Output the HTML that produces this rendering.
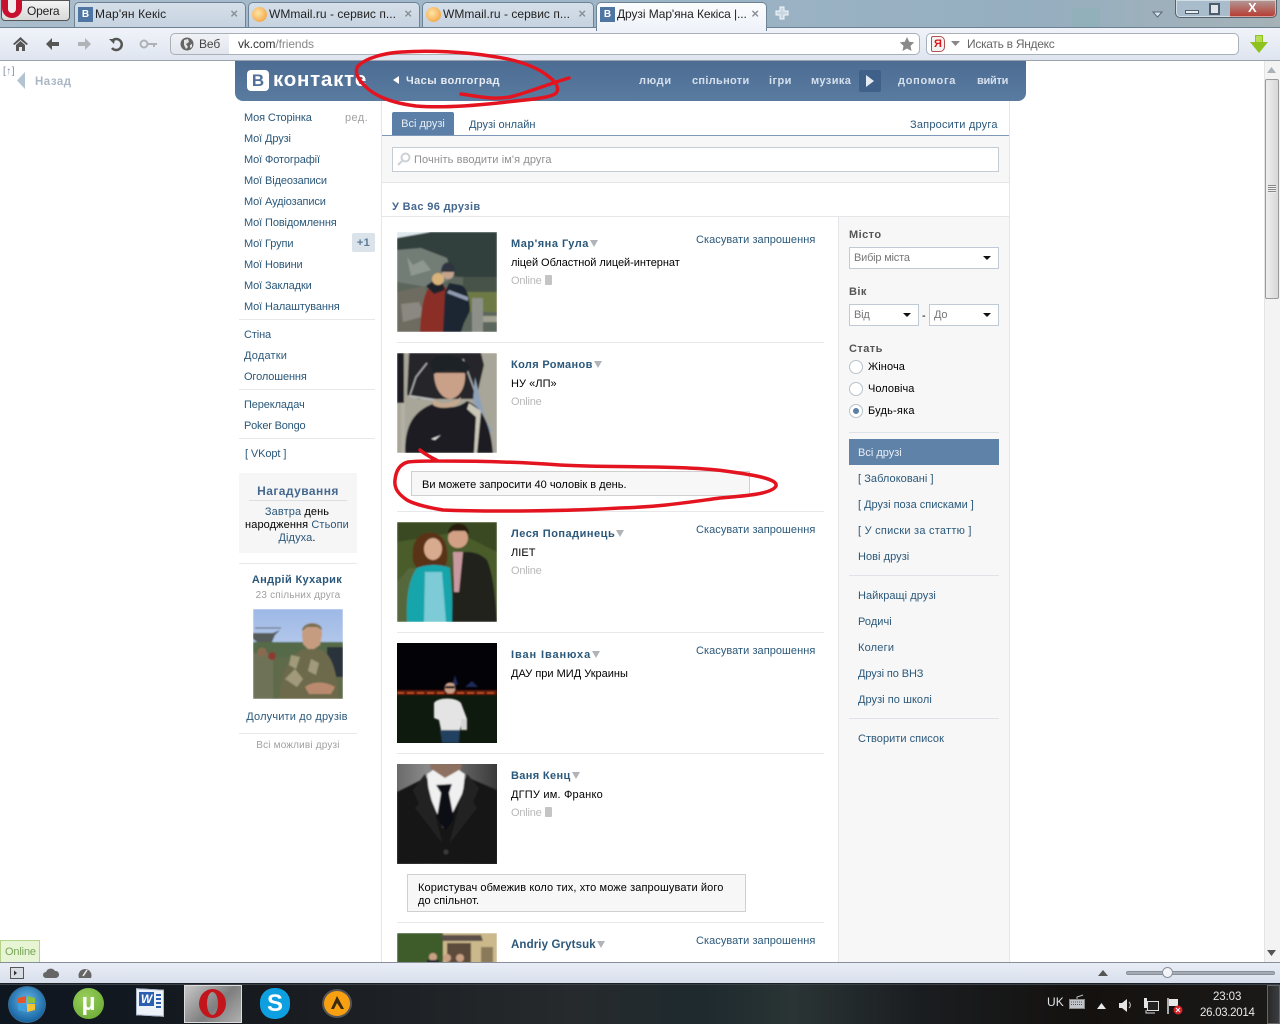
<!DOCTYPE html>
<html><head><meta charset="utf-8"><title>Друзі</title>
<style>
html,body{margin:0;padding:0;width:1280px;height:1024px;overflow:hidden;background:#fff}
body{position:relative;font-family:"Liberation Sans","Noto Sans CJK SC",sans-serif;font-size:11px;color:#000}
.t{position:absolute;white-space:nowrap;line-height:14px;letter-spacing:.05px;margin-top:1px}
.c{margin-top:0}
.l{color:#2b587a}
.m{letter-spacing:-.12px}
.b{font-weight:bold}
.g{color:#a0a0a0}
.ctr{left:239px;width:118px;text-align:center}
.box{position:absolute;box-sizing:border-box}
.tab{position:absolute;top:2px;height:25px;box-sizing:border-box;border:1px solid #6d8296;border-bottom:none;border-radius:5px 5px 0 0;background:linear-gradient(#d5dfe9,#c6d3e0)}
.tab span{position:absolute;top:4px;font-size:12px;line-height:15px;white-space:nowrap;color:#222}
.tab i{position:absolute;right:7px;top:3px;font-style:normal;font-size:13px;color:#8a8f96;font-weight:bold}
.fav{position:absolute;left:3px;top:4px;width:15px;height:15px;background:#4f76a3;color:#fff;font:bold 10px/15px "Liberation Sans",sans-serif;text-align:center}
.mail{position:absolute;left:3px;top:4px;width:15px;height:15px;border-radius:50%;background:radial-gradient(circle at 40% 40%,#ffe4a8,#f0962a)}
.nav{position:absolute;top:74px;color:#d5e0ec;font-weight:bold;font-size:11px;line-height:14px;letter-spacing:.42px;white-space:nowrap}
.sep{position:absolute;height:1px;background:#e6e8ea}
.ph{position:absolute;width:100px;height:100px;left:397px;overflow:hidden}
.sel{position:absolute;box-sizing:border-box;height:22px;border:1px solid #c0cad5;background:#fff;color:#777;font-size:11px;line-height:21px;padding-left:4px;letter-spacing:-.2px}
.sel:after{content:"";position:absolute;right:7px;top:8px;border:4px solid transparent;border-top:4px solid #111;border-bottom:0}
.rd{position:absolute;left:849px;width:14px;height:14px;box-sizing:border-box;border:1px solid #b9c2cb;border-radius:50%;background:#fff}
.tr{display:inline-block;border:4px solid transparent;border-top:7px solid #b0b4b8;border-bottom:0;margin-left:1px;vertical-align:0}
.ol{color:#b8b8b8;letter-spacing:-.2px}
.ph0{position:absolute;width:7px;height:10px;background:#c4c4c4;border-radius:1px}
.ti{position:absolute}
</style></head><body>

<!-- browser chrome -->
<div class="box" style="left:0;top:0;width:1280px;height:28px;background:linear-gradient(90deg,#a9bdcc,#9db5c6 50%,#95aec0 80%,#a5b2b8)"></div>
<div class="box" style="left:1072px;top:8px;width:28px;height:19px;background:#8fb0b8;opacity:.7"></div>
<div class="box" style="left:1px;top:0;width:69px;height:21px;background:linear-gradient(#f3f3f3,#d9d9d9);border:1px solid #555;border-radius:0 0 4px 4px"></div>
<div class="box" style="left:2px;top:0;width:20px;height:18px;background:#c8102e;border-radius:0 0 11px 11px"></div>
<div class="box" style="left:8px;top:0;width:8px;height:13px;background:#f3eeee;border-radius:0 0 5px 5px"></div>
<div class="t c" style="left:27px;top:4px;font-size:12px;color:#222;letter-spacing:-.2px">Opera</div>

<div class="tab" style="left:74px;width:172px"><b class="fav">В</b><span style="left:20px;letter-spacing:.12px">Мар'ян Кекіс</span><i>×</i></div>
<div class="tab" style="left:248px;width:172px"><b class="mail"></b><span style="left:20px;letter-spacing:.03px">WMmail.ru - сервис п...</span><i>×</i></div>
<div class="tab" style="left:422px;width:172px"><b class="mail"></b><span style="left:20px;letter-spacing:.03px">WMmail.ru - сервис п...</span><i>×</i></div>
<div class="tab" style="left:596px;width:171px;height:29px;background:linear-gradient(#fbfcfe,#eef2f8);z-index:2"><b class="fav">В</b><span style="left:20px;letter-spacing:-.08px">Друзі Мар'яна Кекіса |...</span><i>×</i></div>
<svg class="ti" style="left:775px;top:6px" width="14" height="14"><path d="M5 1h4v4h4v4H9v4H5V9H1V5h4z" fill="#c8d6e2" stroke="#f4f7fa"/></svg>
<svg class="ti" style="left:1152px;top:11px" width="11" height="7"><path d="M1 1h9L5.500 6z" fill="#dfe7ee" stroke="#56697a"/></svg>

<div class="box" style="left:1175px;top:0;width:102px;height:18px;border:1px solid #52646f;border-top:none;border-radius:0 0 5px 5px;box-shadow:inset 0 0 0 1px rgba(255,255,255,.5);overflow:hidden;background:linear-gradient(90deg,#a9bccb 0 54px,rgba(0,0,0,0) 54px),linear-gradient(#b09a98,#b8392e)"></div>
<div class="box" style="left:1185px;top:10px;width:14px;height:4px;background:#e8eef3;border:1px solid #4e5d69"></div>
<div class="box" style="left:1209px;top:3px;width:11px;height:12px;border:2px solid #4e5d69;background:#dfe7ed"></div>
<div class="t c b" style="left:1248px;top:1px;color:#fff;font-size:13px">X</div>

<!-- toolbar -->
<div class="box" style="left:0;top:27px;width:1280px;height:34px;background:linear-gradient(#f0f3f9,#dfe5f0);border-bottom:1px solid #9aa3ac;border-top:1px solid #6e8190"></div>
<svg class="ti" style="left:12px;top:36px" width="18" height="16"><path d="M1 8L8.500 1l7.500 7-1.500 1L8.500 4l-6 5z M4 9l4.500-4L13 9v6H10v-4H7v4H4z" fill="#555"/></svg>
<svg class="ti" style="left:45px;top:37px" width="16" height="14"><path d="M7 1L1 7l6 6V9h7V5H7z" fill="#555"/></svg>
<svg class="ti" style="left:76px;top:37px" width="16" height="14"><path d="M9 1l6 6-6 6V9H2V5h7z" fill="#b0b4b9"/></svg>
<svg class="ti" style="left:108px;top:36px" width="16" height="16"><path d="M4 5a5.500 5.500 0 1 1 0 7" fill="none" stroke="#555" stroke-width="2.500"/><path d="M1 3l6 0-1 5z" fill="#555"/></svg>
<svg class="ti" style="left:139px;top:38px" width="20" height="12"><circle cx="5" cy="6" r="3.500" fill="none" stroke="#aeb2b6" stroke-width="2"/><path d="M8 5h10v2h-2v2h-2V7H8z" fill="#aeb2b6"/></svg>
<div class="box" style="left:170px;top:33px;width:60px;height:22px;border:1px solid #a9b0b8;border-radius:5px 0 0 5px;background:linear-gradient(#f0f2f6,#e2e6ec)"></div>
<div class="box" style="left:229px;top:33px;width:691px;height:22px;border:1px solid #a9b0b8;border-left:none;border-radius:0 5px 5px 0;background:#fff"></div>
<svg class="ti" style="left:180px;top:37px" width="15" height="15"><circle cx="7" cy="7" r="6.500" fill="#666"/><path d="M4 3l4-1 1 3-3 2 2 3-2 2-2-4z M10 8l2-1 0 3-2 1z" fill="#e4e4e4"/></svg>
<div class="t c" style="left:199px;top:37px;font-size:12px;color:#444;letter-spacing:-.1px">Веб</div>
<div class="t c" style="left:238px;top:37px;font-size:12px;color:#333;letter-spacing:-.1px">vk.com<span style="color:#888">/friends</span></div>
<svg class="ti" style="left:899px;top:36px" width="16" height="16"><path d="M8 1l2.200 4.800 5 .6-3.700 3.500 1 5.100L8 12.500 3.500 15l1-5.100L.8 6.400l5-.6z" fill="#8a8a8a"/></svg>
<div class="box" style="left:926px;top:33px;width:313px;height:22px;border:1px solid #a9b0b8;border-radius:5px;background:#fff"></div>
<div class="box" style="left:931px;top:36px;width:14px;height:16px;background:#f2f2f2;border:1px solid #b05050;border-radius:2px 5px 5px 2px;color:#d81818;font:bold 11px/15px 'Liberation Sans',sans-serif;text-align:center">Я</div>
<svg class="ti" style="left:951px;top:41px" width="9" height="6"><path d="M0 0h9L4.500 5z" fill="#888"/></svg>
<div class="t c" style="left:967px;top:37px;font-size:12px;color:#666;letter-spacing:-.28px">Искать в Яндекс</div>
<svg class="ti" style="left:1249px;top:34px" width="20" height="20"><path d="M6 1h8v7h5L10 19 1 8h5z" fill="#8ec21f"/><path d="M7 2h6v6H7z" fill="#b8dd55"/></svg>

<!-- back column -->
<div class="t c" style="left:3px;top:65px;font-size:10px;color:#7b8a99;letter-spacing:.5px">[↑]</div>
<svg class="ti" style="left:17px;top:72px" width="9" height="17"><path d="M8 0v17L0 8.500z" fill="#b4c3d2"/></svg>
<div class="t b" style="left:35px;top:74px;font-size:11.500px;color:#a9b7c6;letter-spacing:.5px">Назад</div>

<!-- header -->
<div class="box" style="left:235px;top:61px;width:791px;height:40px;background:linear-gradient(#4c6c93,#5a7ba0);border-radius:0 0 8px 8px"></div>
<div class="box" style="left:247px;top:70px;width:22px;height:21px;background:#fff;border-radius:4px;color:#4f7099;font:bold 17px/21px 'Liberation Sans',sans-serif;text-align:center">В</div>
<div class="t c b" style="left:273px;top:69px;font-size:20.500px;line-height:22px;color:#fff;letter-spacing:.75px">контакте</div>
<svg class="ti" style="left:393px;top:76px" width="6" height="8"><path d="M6 0v8L0 4z" fill="#fff"/></svg>
<div class="nav" style="left:406px;color:#e5ecf3;letter-spacing:.42px">Часы волгоград</div>
<div class="nav" style="left:639px;letter-spacing:.7px">люди</div>
<div class="nav" style="left:692px;letter-spacing:.3px">спільноти</div>
<div class="nav" style="left:769px">ігри</div>
<div class="nav" style="left:811px">музика</div>
<div class="box" style="left:859px;top:70px;width:22px;height:22px;background:#3f6088;border-radius:2px"></div>
<svg class="ti" style="left:866px;top:75px" width="8" height="12"><path d="M0 0l8 6-8 6z" fill="#e4ebf3"/></svg>
<div class="nav" style="left:898px;letter-spacing:.72px">допомога</div>
<div class="nav" style="left:977px;letter-spacing:-.25px">вийти</div>

<!-- left menu -->
<div class="t l m" style="left:244px;top:110px">Моя Сторінка</div>
<div class="t g" style="left:345px;top:110px;letter-spacing:.4px">ред.</div>
<div class="t l m" style="left:244px;top:131px">Мої Друзі</div>
<div class="t l m" style="left:244px;top:152px">Мої Фотографії</div>
<div class="t l m" style="left:244px;top:173px">Мої Відеозаписи</div>
<div class="t l m" style="left:244px;top:194px">Мої Аудіозаписи</div>
<div class="t l m" style="left:244px;top:215px">Мої Повідомлення</div>
<div class="t l m" style="left:244px;top:236px">Мої Групи</div>
<div class="box b" style="left:352px;top:233px;width:23px;height:19px;background:#dae2ea;border-radius:2px;color:#5c7a99;text-align:center;line-height:20px;letter-spacing:.4px">+1</div>
<div class="t l m" style="left:244px;top:257px">Мої Новини</div>
<div class="t l m" style="left:244px;top:278px">Мої Закладки</div>
<div class="t l m" style="left:244px;top:299px">Мої Налаштування</div>
<div class="sep" style="left:239px;top:319px;width:136px"></div>
<div class="t l m" style="left:244px;top:327px">Стіна</div>
<div class="t l" style="left:244px;top:348px;letter-spacing:.2px">Додатки</div>
<div class="t l m" style="left:244px;top:369px">Оголошення</div>
<div class="sep" style="left:239px;top:389px;width:136px"></div>
<div class="t l m" style="left:244px;top:397px">Перекладач</div>
<div class="t l" style="left:244px;top:418px;letter-spacing:-.2px">Poker Bongo</div>
<div class="sep" style="left:239px;top:438px;width:136px"></div>
<div class="t l" style="left:245px;top:446px;letter-spacing:-.1px">[ VKopt ]</div>

<div class="box" style="left:239px;top:473px;width:118px;height:80px;background:#f6f6f7"></div>
<div class="t b ctr" style="top:483px;font-size:12px;color:#45688e;letter-spacing:.45px">Нагадування</div>
<div class="sep" style="left:249px;top:500px;width:98px;background:#dcdfe2"></div>
<div class="t ctr" style="left:238px;top:504px;letter-spacing:.1px"><span class="l">Завтра</span> день</div>
<div class="t ctr" style="left:238px;top:517px;letter-spacing:.1px">народження <span class="l">Стьопи</span></div>
<div class="t ctr" style="left:238px;top:530px;letter-spacing:.1px"><span class="l">Дідуха</span>.</div>
<div class="sep" style="left:239px;top:563px;width:118px"></div>
<div class="t b l ctr" style="left:238px;top:572px;letter-spacing:.35px">Андрій Кухарик</div>
<div class="t g ctr" style="top:588px;font-size:10px;letter-spacing:.17px">23 спільних друга</div>

<svg class="ti" style="left:253px;top:609px" width="90" height="90" viewBox="0 0 90 90">
<defs><filter id="bl"><feGaussianBlur stdDeviation=".9"/></filter><linearGradient id="sky" x1="0" y1="0" x2="0" y2="1"><stop offset="0" stop-color="#9db8e6"/><stop offset="1" stop-color="#d3e0ee"/></linearGradient></defs>
<g filter="url(#bl)"><rect width="90" height="90" fill="url(#sky)"/><rect y="33" width="90" height="20" fill="#556a4a"/><rect y="48" width="90" height="42" fill="#5f6a4c"/><path d="M0 24h20l7-3-5 5-3 7H4l-4-3z" fill="#555a5a"/><path d="M2 19h26" stroke="#555"/><rect x="0" y="44" width="20" height="46" fill="#6e7358"/><circle cx="9" cy="43" r="4.500" fill="#8a6a50"/><circle cx="19" cy="47" r="4" fill="#8a3a30"/><rect x="74" y="38" width="16" height="30" fill="#2c333b"/><path d="M49 26c0-16 20-16 20 0l-2 10-6 4h-6l-5-5z" fill="#c69c80"/><path d="M49 22c0-10 20-10 20-1l-5-3h-10z" fill="#7a6d50"/><path d="M26 90c2-22 8-42 24-50h16c14 4 18 26 20 50z" fill="#6c6a4c"/><path d="M32 70l10-10 8 10-6 8zM58 50l8 4-3 12-8-4zM38 46l9 2-4 12-7-4z" fill="#a09a7a"/><path d="M52 78c8-6 20-6 30 0l-4 7H56z" fill="#b98a6e"/></g></svg>

<div class="t l ctr" style="left:238px;top:709px;letter-spacing:.17px">Долучити до друзів</div>
<div class="sep" style="left:239px;top:733px;width:118px"></div>
<div class="t g ctr" style="top:738px;font-size:10px;letter-spacing:.17px">Всі можливі друзі</div>

<!-- main column -->
<div class="box" style="left:381px;top:101px;width:629px;height:862px;border-left:1px solid #e4e6e9;border-right:1px solid #e4e6e9"></div>
<div class="box" style="left:392px;top:112px;width:62px;height:23px;background:#5b7fa6;border-radius:2px 2px 0 0;color:#e8eef5;text-align:center;line-height:25px">Всі друзі</div>
<div class="box" style="left:382px;top:135px;width:627px;height:1px;background:#7e99b8"></div>
<div class="t l" style="left:469px;top:117px;letter-spacing:0">Друзі онлайн</div>
<div class="t l" style="left:910px;top:117px;letter-spacing:.2px">Запросити друга</div>
<div class="box" style="left:382px;top:136px;width:627px;height:47px;background:#f7f7f7;border-bottom:1px solid #e4e6e9"></div>
<div class="box" style="left:392px;top:147px;width:607px;height:25px;background:#fff;border:1px solid #c4ccd5"></div>
<svg class="ti" style="left:397px;top:152px" width="14" height="14"><circle cx="8.500" cy="5.500" r="4" fill="none" stroke="#ccd1d6" stroke-width="2"/><path d="M5 9l-4 4" stroke="#ccd1d6" stroke-width="2"/></svg>
<div class="t" style="left:414px;top:152px;color:#8f8f8f;letter-spacing:.1px">Почніть вводити ім'я друга</div>
<div class="t b" style="left:392px;top:199px;color:#45688e;letter-spacing:.35px">У Вас 96 друзів</div>
<div class="box" style="left:382px;top:216px;width:627px;height:1px;background:#e4e6e9"></div>

<!-- filter column -->
<div class="box" style="left:838px;top:217px;width:171px;height:746px;background:#f7f7f7;border-left:1px solid #e4e6e9"></div>
<div class="t b" style="left:849px;top:227px;color:#555;letter-spacing:.45px">Місто</div>
<div class="sel" style="left:849px;top:247px;width:150px">Вибір міста</div>
<div class="t b" style="left:849px;top:284px;color:#555;letter-spacing:.45px">Вік</div>
<div class="sel" style="left:849px;top:304px;width:70px">Від</div>
<div class="t" style="left:922px;top:308px">-</div>
<div class="sel" style="left:929px;top:304px;width:70px">До</div>
<div class="t b" style="left:849px;top:341px;color:#555;letter-spacing:.45px">Стать</div>
<div class="rd" style="top:360px"></div><div class="t" style="left:868px;top:359px;letter-spacing:.1px">Жіноча</div>
<div class="rd" style="top:382px"></div><div class="t" style="left:868px;top:381px">Чоловіча</div>
<div class="rd" style="top:404px"></div><div class="box" style="left:853px;top:408px;width:6px;height:6px;border-radius:50%;background:#5b7fa6"></div><div class="t" style="left:868px;top:403px;letter-spacing:.2px">Будь-яка</div>
<div class="sep" style="left:849px;top:432px;width:150px;background:#dfe3e8"></div>
<div class="box" style="left:849px;top:439px;width:150px;height:26px;background:#5f82a8;color:#e8eef5;line-height:28px;padding-left:9px">Всі друзі</div>
<div class="t l" style="left:858px;top:471px">[ Заблоковані ]</div>
<div class="t l" style="left:858px;top:497px;letter-spacing:0">[ Друзі поза списками ]</div>
<div class="t l" style="left:858px;top:523px;letter-spacing:.25px">[ У списки за статтю ]</div>
<div class="t l" style="left:858px;top:549px">Нові друзі</div>
<div class="sep" style="left:849px;top:575px;width:150px;background:#dfe3e8"></div>
<div class="t l" style="left:858px;top:588px">Найкращі друзі</div>
<div class="t l" style="left:858px;top:614px">Родичі</div>
<div class="t l" style="left:858px;top:640px;letter-spacing:.2px">Колеги</div>
<div class="t l" style="left:858px;top:666px;letter-spacing:-.1px">Друзі по ВНЗ</div>
<div class="t l" style="left:858px;top:692px">Друзі по школі</div>
<div class="sep" style="left:849px;top:718px;width:150px;background:#dfe3e8"></div>
<div class="t l" style="left:858px;top:731px;letter-spacing:.03px">Створити список</div>

<!-- friends -->
<svg class="ph" style="top:232px" viewBox="0 0 100 100"><g filter="url(#bl)"><rect width="100" height="100" fill="#5c665c"/><path d="M0 6L34 0H0z" fill="#dfe8ee"/><path d="M0 6L34 0h66v45H60L0 22z" fill="#323f3d"/><path d="M0 18l24-2 26 10 6 20-20 10-36-6z" fill="#727d76"/><path d="M10 25l6 8 10-5 8 10-20 6z" fill="#8e9890"/><path d="M66 45h34v15l-34 4z" fill="#47524a"/><path d="M58 60h42v20H58z" fill="#6d7a45"/><path d="M0 60l28-6 10 46H0z" fill="#6e6c60"/><path d="M4 72l18-2 6 14-22 6z" fill="#8a8880"/><rect x="75" y="66" width="11" height="34" fill="#8c9088"/><path d="M86 84h14v6H86z" fill="#a2a292"/><path d="M23 100c1-24 4-40 10-45 6-4 13-3 16 1 3 6 4 12 5 18l4 8-6 3-3 15z" fill="#8a2e26"/><path d="M29 54l7-5 10 3 2 6-11 4z" fill="#1d2229"/><circle cx="41" cy="47" r="6" fill="#d7b27a"/><path d="M46 100l2-40 4-9 12 2c6 2 9 14 9 26l-6 12-3 9z" fill="#1f2533"/><path d="M52 58l19 7v4l-21-8z" fill="#8f9bb0"/><circle cx="51" cy="41" r="6" fill="#c4a38c"/><path d="M44 40c0-13 14-13 14 0z" fill="#2e3440"/></g></svg>
<div class="t b l" style="left:511px;top:236px;letter-spacing:.5px">Мар'яна Гула<span class="tr"></span></div>
<div class="t" style="left:511px;top:255px;letter-spacing:-.05px">ліцей Областной лицей-интернат</div>
<div class="t ol" style="left:511px;top:273px">Online</div><div class="ph0" style="left:545px;top:275px"></div>
<div class="t l" style="left:696px;top:232px">Скасувати запрошення</div>
<div class="sep" style="left:397px;top:342px;width:427px"></div>

<svg class="ph" style="top:353px" viewBox="0 0 100 100"><g filter="url(#bl)"><rect width="100" height="100" fill="#a8a599"/><path d="M0 0h7v50H0z" fill="#1e1e22"/><path d="M4 50h4v50H4z" fill="#b3b1a5"/><path d="M12 0h72l3 12-8 34H22L10 42z" fill="#25262b"/><path d="M13 42L19 24 30 10" stroke="#a9aaaa" stroke-width="1.500" fill="none"/><path d="M12 43l26 4" stroke="#b9baba" stroke-width="2"/><path d="M66 6l14 38" stroke="#a9aaaa" stroke-width="1.500" fill="none"/><path d="M78 24l10 42 7 12-5 2-14-32z" fill="#8ea1b8"/><path d="M8 100c0-28 8-42 30-50 10 6 22 6 32-2 16 6 24 26 26 52z" fill="#1a1c24"/><path d="M72 50l12 8-4 42h-3l2-36-9-8z" fill="#c9c7b8"/><path d="M36 46c6 6 18 6 28-2l-2 6c-8 6-20 6-26 2z" fill="#c6a88e"/><path d="M37 20h31c1 12-4 24-14 26-10 0-17-12-17-26z" fill="#c9a088"/><path d="M33 12c0-7 8-10 16-10 8 0 18 4 24 12l-4 7c-10-6-22-6-32 0z" fill="#1f2228"/><path d="M34 86l10-4-6 5z" fill="#e6e6e6"/></g></svg>
<div class="t b l" style="left:511px;top:357px;letter-spacing:.35px">Коля Романов<span class="tr"></span></div>
<div class="t" style="left:511px;top:376px">НУ «ЛП»</div>
<div class="t ol" style="left:511px;top:394px">Online</div>

<div class="box" style="left:411px;top:471px;width:339px;height:25px;background:#f7f7f7;border:1px solid #d0d0d0"></div>
<div class="t" style="left:422px;top:477px;letter-spacing:0">Ви можете запросити 40 чоловік в день.</div>
<div class="sep" style="left:397px;top:511px;width:427px"></div>

<svg class="ph" style="top:522px" viewBox="0 0 100 100"><g filter="url(#bl)"><rect width="100" height="100" fill="#4a5c2a"/><path d="M0 0h100v30L60 10 0 20z" fill="#3a4a20"/><path d="M0 100V60l12-14h8v54z" fill="#55683a"/><path d="M16 30c0-26 34-26 34 0 1 6 0 12-3 16H20c-4-4-5-10-4-16z" fill="#5a3018"/><ellipse cx="36" cy="27" rx="9" ry="11" fill="#d9ab8e"/><path d="M10 100c-1-22 1-42 10-54 10-4 24-4 33 0l4 54z" fill="#18a5ab"/><path d="M28 50h17l4 50H27z" fill="#7ccbd6"/><path d="M55 100l1-66c8-6 24-6 34 4 6 14 8 34 10 62z" fill="#24201e"/><path d="M56 30l10 0-4 40-5 0z" fill="#c89aa0"/><circle cx="61" cy="16" r="10" fill="#d2a084"/><path d="M51 12c0-14 21-14 21 0l-4-3h-12z" fill="#2a1a10"/></g></svg>
<div class="t b l" style="left:511px;top:526px;letter-spacing:.5px">Леся Попадинець<span class="tr"></span></div>
<div class="t" style="left:511px;top:545px">ЛІЕТ</div>
<div class="t ol" style="left:511px;top:563px">Online</div>
<div class="t l" style="left:696px;top:522px">Скасувати запрошення</div>
<div class="sep" style="left:397px;top:632px;width:427px"></div>

<svg class="ph" style="top:643px" viewBox="0 0 100 100"><rect width="100" height="100" fill="#030206"/><rect y="52" width="100" height="48" fill="#0f1a0e"/><g filter="url(#bl)"><rect y="47" width="100" height="5" fill="#5a1a10"/><path d="M0 50h100" stroke="#d05520" stroke-width="1.500" stroke-dasharray="7 3"/><path d="M55 42l3-10 3 10zM68 44l7-6 6 6z" fill="#1b2a5a"/><circle cx="53" cy="45" r="5.500" fill="#caa08a"/><rect x="48" y="43" width="10" height="2.500" fill="#111"/><path d="M37 60c4-6 22-6 27 0l6 16-5 2-2 9H44l-2-10-5-2z" fill="#e4e4e4"/><path d="M43 87h20l-1 13H45z" fill="#23405f"/><path d="M64 76h6v11h-6z" fill="#d4d4d4"/></g></svg>
<div class="t b l" style="left:511px;top:647px;letter-spacing:.9px">Іван Іванюха<span class="tr"></span></div>
<div class="t" style="left:511px;top:666px;letter-spacing:0">ДАУ при МИД Украины</div>
<div class="t l" style="left:696px;top:643px">Скасувати запрошення</div>
<div class="sep" style="left:397px;top:753px;width:427px"></div>

<svg class="ph" style="top:764px" viewBox="0 0 100 100"><defs><linearGradient id="gy" x1="0" y1="0" x2="1" y2="0"><stop offset="0" stop-color="#6a6a6a"/><stop offset=".3" stop-color="#8a8a8a"/><stop offset="1" stop-color="#3a3a3a"/></linearGradient></defs><rect width="100" height="100" fill="url(#gy)"/><g filter="url(#bl)"><path d="M0 28l28-14 44 0 28 12v74H0z" fill="#141414"/><path d="M33 0h32l-2 8-14 6-14-6z" fill="#8e7060"/><path d="M30 10l6-4 12 8 14-8 6 4-2 18-18 36h-2L32 30z" fill="#f0f0f0"/><path d="M39 21l16-1-3 9 5 26-9 12-8-14 4-24z" fill="#111114"/><path d="M28 10l-12 16 6 14-4 4 28 36-4-14z" fill="#222"/><path d="M70 10l12 14-6 14 4 6-28 36 4-14z" fill="#222"/><circle cx="49" cy="88" r="2.500" fill="#3a3a3a"/></g></svg>
<div class="t b l" style="left:511px;top:768px;letter-spacing:.35px">Ваня Кенц<span class="tr"></span></div>
<div class="t" style="left:511px;top:787px;letter-spacing:.2px">ДГПУ им. Франко</div>
<div class="t ol" style="left:511px;top:805px">Online</div><div class="ph0" style="left:545px;top:807px"></div>
<div class="box" style="left:407px;top:874px;width:339px;height:38px;background:#f7f7f7;border:1px solid #d0d0d0"></div>
<div class="t" style="left:418px;top:880px;letter-spacing:.1px">Користувач обмежив коло тих, хто може запрошувати його</div>
<div class="t" style="left:418px;top:893px">до спільнот.</div>
<div class="sep" style="left:397px;top:922px;width:427px"></div>

<svg class="ph" style="top:933px;height:30px" viewBox="0 0 100 30"><g filter="url(#bl)"><rect width="100" height="30" fill="#cbb98c"/><rect width="46" height="30" fill="#3e5c2c"/><path d="M44 2h40l2 6H46z" fill="#5a5048"/><rect x="50" y="10" width="24" height="20" fill="#5c4c3a"/><rect x="84" y="14" width="12" height="16" fill="#8a7a5a"/><circle cx="36" cy="24" r="4" fill="#caa084"/><rect x="30" y="27" width="12" height="3" fill="#223"/><circle cx="50" cy="25" r="4" fill="#caa084"/><circle cx="63" cy="25" r="4" fill="#caa084"/></g></svg>
<div class="t b l" style="left:511px;top:937px;font-size:11.500px;letter-spacing:.12px">Andriy Grytsuk<span class="tr"></span></div>
<div class="t l" style="left:696px;top:933px">Скасувати запрошення</div>

<!-- scribbles -->
<svg class="ti" style="left:0;top:0;z-index:5;pointer-events:none" width="1280" height="1024" fill="none" stroke="#e3141f" stroke-width="3.500" stroke-linecap="round" stroke-linejoin="round">
<path d="M367 88C358 80 354 72 358 66C366 58 384 53 402 52C430 50 465 52 490 56C520 60 538 68 548 76C556 82 560 88 556 93C550 99 520 100 498 103C470 106 440 108 416 106C392 103 376 96 367 88"/>
<path d="M569 78C548 84 530 92 510 97C492 100 476 96 461 94"/>
<path d="M420 450C426 455 432 458 438 461C480 461 520 462 560 465C610 468 680 465 725 471C755 475 778 479 776 486C772 494 745 496 720 498C690 502 660 507 620 508C570 511 490 512 443 510C425 507 412 503 407 500C398 494 394 488 395 480C396 470 400 464 408 462C416 461 426 461 438 461"/>
</svg>

<!-- scrollbar -->
<div class="box" style="left:1264px;top:61px;width:16px;height:902px;background:#f3f3f3;border-left:1px solid #e4e4e4"></div>
<svg class="ti" style="left:1267px;top:67px" width="9" height="6"><path d="M4.500 0L9 6H0z" fill="#aab0b6"/></svg>
<div class="box" style="left:1265px;top:79px;width:14px;height:220px;background:linear-gradient(90deg,#eee,#d8d8d8);border:1px solid #9a9a9a;border-radius:2px"></div>
<div class="box" style="left:1268px;top:185px;width:8px;height:8px;background:repeating-linear-gradient(#888 0 1px,#eee 1px 2px)"></div>
<svg class="ti" style="left:1267px;top:950px" width="9" height="6"><path d="M0 0h9L4.500 6z" fill="#555"/></svg>

<!-- online indicator -->
<div class="box" style="left:0;top:940px;width:40px;height:23px;background:#e8f5d5;border:1px solid #b5d48a;color:#77a356;font-size:11px;line-height:22px;padding-left:4px;letter-spacing:-.15px">Online</div>

<!-- status bar -->
<div class="box" style="left:0;top:962px;width:1280px;height:23px;background:linear-gradient(#e9edf6,#d8dfec);border-top:1px solid #888f98;border-bottom:2px solid #1c2026"></div>
<svg class="ti" style="left:10px;top:967px" width="14" height="12"><rect x=".5" y=".5" width="13" height="11" fill="#d8dde4" stroke="#555"/><path d="M4 3.500l3 2.500L4 8.500z" fill="#333"/></svg>
<svg class="ti" style="left:43px;top:968px" width="16" height="11"><path d="M3 10a3 3 0 0 1 0-6 5 5 0 0 1 9-1 3.500 3.500 0 0 1 1 7z" fill="#666"/></svg>
<svg class="ti" style="left:78px;top:967px" width="14" height="12"><path d="M1 11a6.500 6.500 0 1 1 12 0z" fill="#666"/><path d="M5 9l4-6" stroke="#eee" stroke-width="1.500"/></svg>
<svg class="ti" style="left:1098px;top:970px" width="10" height="6"><path d="M5 0l5 6H0z" fill="#555"/></svg>
<div class="box" style="left:1126px;top:971px;width:149px;height:4px;background:#a5abb3;border-radius:2px;border:1px solid #8a9098"></div>
<div class="box" style="left:1162px;top:967px;width:11px;height:11px;border-radius:50%;background:#f2f4f7;border:1px solid #8a9098"></div>

<!-- taskbar -->
<div class="box" style="left:0;top:984px;width:1280px;height:40px;background:linear-gradient(90deg,#0e1620,#171b20 20%,#262a2c 45%,#1e2a2e 55%,#2a3434 62%,#1a1d20 72%,#14110f 85%,#1c1a18);border-top:1px solid #3a4046"></div>
<div class="box" style="left:184px;top:985px;width:58px;height:38px;background:linear-gradient(135deg,#c8c8c8,#7e7e7e 55%,#b0b0b0);border:1px solid #ddd"></div>
<div class="box" style="left:8px;top:986px;width:38px;height:37px;border-radius:50%;background:radial-gradient(circle at 50% 40%,#6ab7e6,#1b6aa8 70%,#0e3a63);border:1px solid #3a6a90"></div>
<svg class="ti" style="left:17px;top:995px" width="20" height="19"><path d="M1 3l8-2v7H1z" fill="#e2562a"/><path d="M10 1l8 2v5h-8z" fill="#8cc23c"/><path d="M1 9h8v8l-8-2z" fill="#3fa0e0"/><path d="M10 9h8v6l-8 2z" fill="#f4c430"/></svg>
<div class="box" style="left:73px;top:988px;width:31px;height:31px;border-radius:50%;background:radial-gradient(circle at 40% 35%,#9bcf5c,#62a52e);color:#fff;font:bold 24px/30px 'Liberation Sans',sans-serif;text-align:center">µ</div>
<div class="box" style="left:136px;top:989px;width:28px;height:27px;background:#eef3fa;border:1px solid #aab8cc;transform:skewY(3deg)"></div>
<div class="box" style="left:139px;top:992px;width:15px;height:14px;background:#2b5fb0;color:#fff;font:italic bold 12px/14px 'Liberation Sans',sans-serif;text-align:center">W</div>
<div class="box" style="left:156px;top:994px;width:5px;height:16px;background:repeating-linear-gradient(#2b5fb0 0 2px,#eef3fa 2px 4px)"></div>
<div class="box" style="left:199px;top:989px;width:27px;height:29px;border-radius:50%;border-style:solid;border-color:#c3161c;border-width:3px 8px"></div>
<div class="box" style="left:260px;top:988px;width:30px;height:31px;border-radius:14px;background:#0d9fe0;color:#fff;font:bold 24px/31px 'Liberation Sans',sans-serif;text-align:center">S</div>
<div class="box" style="left:322px;top:989px;width:30px;height:29px;border-radius:50%;background:#f7a011;border:2px solid #555"></div>
<svg class="ti" style="left:329px;top:995px" width="16" height="16"><path d="M8 1L2 14h3l3-6 4 6h3z" fill="#3a2a10"/></svg>
<div class="t c" style="left:1047px;top:995px;font-size:12px;color:#dfe3e8">UK</div>
<svg class="ti" style="left:1069px;top:994px" width="16" height="15"><rect x=".5" y="5.500" width="15" height="9" fill="#c2c6ca" stroke="#888"/><path d="M2 8h12M2 10.500h12" stroke="#555" stroke-dasharray="1 1"/><path d="M8 5V3l6-2" stroke="#bbb" fill="none"/></svg>
<svg class="ti" style="left:1097px;top:1003px" width="9" height="6"><path d="M4.500 0L9 6H0z" fill="#e8e8e8"/></svg>
<svg class="ti" style="left:1118px;top:998px" width="16" height="15"><path d="M1 5h3l5-4v13l-5-4H1z" fill="#e4e4e4"/><path d="M11 4a4 4 0 0 1 0 6" stroke="#ccc" fill="none"/></svg>
<svg class="ti" style="left:1143px;top:998px" width="16" height="16"><rect x="4.500" y="3.500" width="11" height="9" fill="#222" stroke="#ddd"/><rect x="1" y="0" width="3" height="10" fill="#e4e4e4"/><path d="M3 12v3h9" stroke="#ddd" fill="none"/></svg>
<svg class="ti" style="left:1166px;top:997px" width="17" height="18"><path d="M2 1v16" stroke="#ddd" stroke-width="1.500"/><path d="M3 2h9v7H3z" fill="#e8e8e8"/><circle cx="12" cy="13" r="4.500" fill="#d8222a"/><path d="M10 11l4 4m0-4l-4 4" stroke="#fff"/></svg>
<div class="t c" style="left:1213px;top:990px;font-size:11.500px;color:#e6e8ea;letter-spacing:-.1px">23:03</div>
<div class="t c" style="left:1200px;top:1006px;font-size:11.500px;color:#e6e8ea;letter-spacing:-.3px">26.03.2014</div>
<div class="box" style="left:1267px;top:985px;width:13px;height:39px;background:linear-gradient(90deg,#2a2a2a,#3a3d40);border:1px solid #666"></div>

</body></html>
